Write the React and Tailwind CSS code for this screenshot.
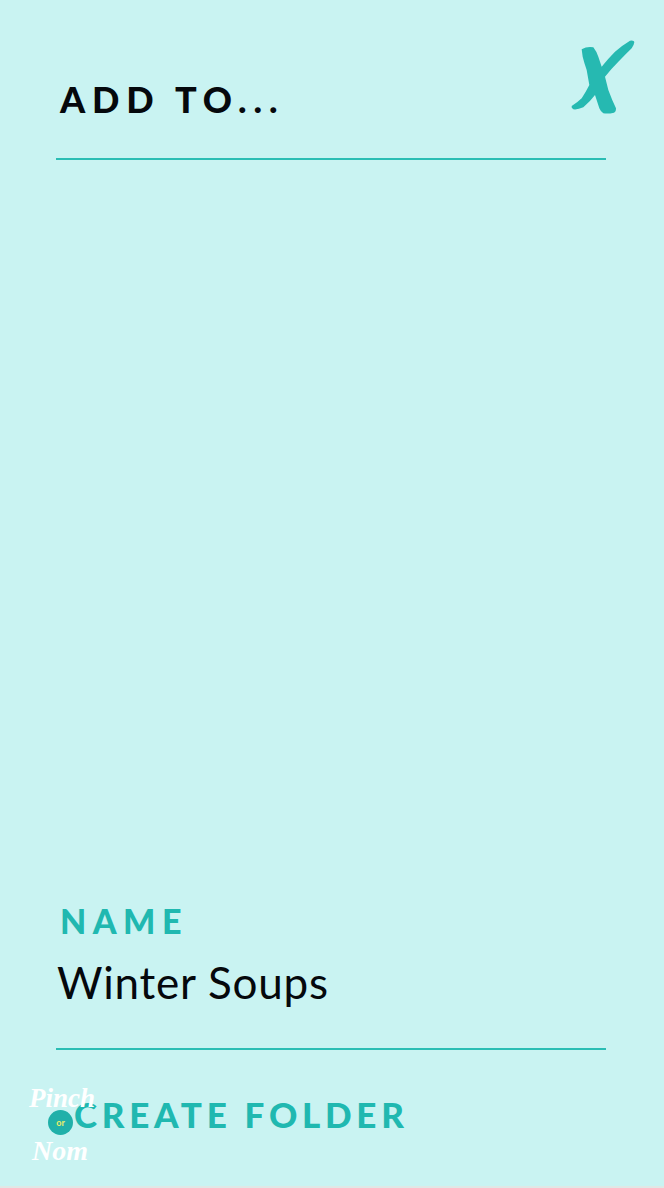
export default function App() {
  return (
    <div className="relative flex h-[1188px] w-[664px] flex-col overflow-hidden bg-[#c9f3f2] font-['Lato',sans-serif]">
      <header className="ml-[56px] mr-[58px] flex h-[160px] shrink-0 items-start border-b-2 border-[#2bbdb4] pt-[77px]">
        <h1 className="pl-[4px] text-[36px] leading-[44px] font-black tracking-[0.19em] text-[#05080c]">ADD TO...</h1>
      </header>
      <svg className="absolute left-[540px] top-[20px] h-[110px] w-[124px]" viewBox="0 0 372 330" aria-label="Close">
        <path fill="#26b9b1" d="M125 88 Q142 78 160 82 Q170 95 175 110 L185 140 Q205 115 225 95 Q248 75 270 62 Q282 60 283 66 Q282 76 275 85 Q255 105 235 125 Q213 147 195 170 L205 210 Q216 240 228 265 Q228 276 222 278 Q205 282 190 280 Q182 275 178 265 L165 225 Q150 245 130 262 Q112 270 100 268 Q93 264 95 258 Q112 248 125 235 Q138 215 148 195 L140 150 Q133 130 128 110 Z" />
      </svg>
      <main className="flex-1" />
      <section className="ml-[56px] mr-[58px] flex shrink-0 flex-col border-b-2 border-[#2bbdb4] pb-[40px]">
        <label className="pl-[4px] text-[34px] leading-[40px] font-black tracking-[0.19em] text-[#20b8b0]">NAME</label>
        <p className="mt-[15px] pl-[1px] text-[44px] leading-[52px] font-normal tracking-[0.018em] text-[#05080c]">Winter Soups</p>
      </section>
      <footer className="flex h-[136px] shrink-0 items-start pt-[42px] pl-[74px]">
        <span className="text-[35px] leading-[44px] font-black tracking-[0.135em] text-[#20b8b0]">CREATE FOLDER</span>
      </footer>
      <div className="h-[2px] shrink-0 bg-[#dfe8e6]" />
      <div className="absolute left-[28px] top-[1082px] flex h-[86px] w-[66px] flex-col items-start">
        <span className="ml-[1px] font-['Liberation_Serif',serif] text-[27px] leading-[32px] font-bold italic text-white">Pinch</span>
        <span className="ml-[20px] mt-[-4px] flex h-[25px] w-[25px] items-center justify-center rounded-full bg-[#20b0a9] text-[9px] leading-none font-bold text-[#e8ee6a]">or</span>
        <span className="ml-[4px] mt-[-1px] font-['Liberation_Serif',serif] text-[28px] leading-[34px] font-bold italic text-white">Nom</span>
      </div>
    </div>
  );
}
